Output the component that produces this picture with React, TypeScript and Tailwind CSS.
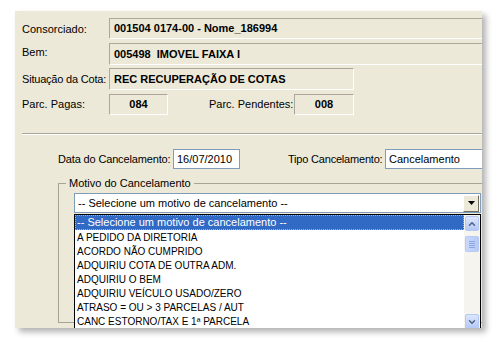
import { ChevronDown, ChevronUp } from 'lucide-react';

const motivos = [
  '-- Selecione um motivo de cancelamento --',
  'A PEDIDO DA DIRETORIA',
  'ACORDO NÃO CUMPRIDO',
  'ADQUIRIU COTA DE OUTRA ADM.',
  'ADQUIRIU O BEM',
  'ADQUIRIU VEÍCULO USADO/ZERO',
  'ATRASO = OU > 3 PARCELAS / AUT',
  'CANC ESTORNO/TAX E 1ª PARCELA',
];

const sunken = 'border-t border-l border-t-[#ACA899] border-l-[#ACA899] border-b border-r border-b-white border-r-white';

function Field({ width, children, center }: { width: string; children: React.ReactNode; center?: boolean }) {
  return (
    <div className={`${width} shrink-0 h-full ${sunken} flex items-center font-bold text-[11px] whitespace-pre ${center ? 'justify-center' : 'pl-[4px]'}`}>
      {children}
    </div>
  );
}

export default function App() {
  return (
    <div className="w-[497px] h-[348px] bg-white pl-[15px] pt-[11px] font-['Liberation_Sans',Arial,sans-serif] text-[11px] text-black">
      <div className="w-[467px] h-[317px] bg-[#ECE9D8] overflow-hidden shadow-[4px_4px_6px_rgba(0,0,0,0.3)]">
        <div className="pl-[7px] pt-[7px] whitespace-nowrap">
          <div className="flex h-[21px]">
            <div className="w-[87px] shrink-0 pt-[3px]">Consorciado:</div>
            <Field width="w-[400px]">001504 0174-00 - Nome_186994</Field>
          </div>
          <div className="flex h-[22px] mt-[4px]">
            <div className="w-[87px] shrink-0 pt-[1px]">Bem:</div>
            <Field width="w-[400px]">005498  IMOVEL FAIXA I</Field>
          </div>
          <div className="flex h-[22px] mt-[3px] items-center">
            <div className="w-[87px] shrink-0 tracking-[-0.2px]">Situação da Cota:</div>
            <Field width="w-[245px]">REC RECUPERAÇÃO DE COTAS</Field>
          </div>
          <div className="flex h-[21px] mt-[4px] items-center">
            <div className="w-[87px] shrink-0">Parc. Pagas:</div>
            <Field width="w-[59px]" center>084</Field>
            <div className="ml-[41px] w-[85px] shrink-0">Parc. Pendentes:</div>
            <Field width="w-[60px]" center>008</Field>
          </div>

          <div className="mt-[18px] h-[2px] w-[470px] border-t border-t-[#ACA899] border-b border-b-white" />

          <div className="flex items-center h-[20px] mt-[14px] pl-[36px]">
            <div className="w-[115px] shrink-0 tracking-[-0.15px]">Data do Cancelamento:</div>
            <div className="w-[67px] shrink-0 h-full bg-white border border-[#7F9DB9] flex items-center pl-[3px]">16/07/2010</div>
            <div className="ml-[48px] w-[97px] shrink-0 tracking-[-0.2px]">Tipo Cancelamento:</div>
            <div className="w-[130px] shrink-0 h-full bg-white border border-[#7F9DB9] flex items-center pl-[3px]">Cancelamento</div>
          </div>

          <fieldset className="ml-[36px] mt-[8px] w-[440px] h-[146px] border border-[#A6A595]">
            <legend className="ml-[7px] px-[3px] leading-[13px]">Motivo do Cancelamento</legend>
            <div className="relative ml-[15px] mt-[3px] w-[407px] h-[20px] bg-white border border-[#7F9DB9] flex items-center pl-[3px]">
              <span className="flex-1">-- Selecione um motivo de cancelamento --</span>
              <div className="w-[16px] h-[17px] mr-[1px] bg-[#ECE9D8] border-t border-l border-t-white border-l-white border-b border-r border-b-[#716F64] border-r-[#716F64] flex items-center justify-center">
                <svg width="7" height="4" viewBox="0 0 7 4"><path d="M0 0h7L3.5 4z" fill="#000" /></svg>
              </div>
              <div className="absolute left-[-1px] top-[20px] w-[407px] h-[122px] bg-white border border-black flex">
                <div className="flex-1 flex flex-col">
                  {motivos.map((m, i) => (
                    <div
                      key={m}
                      className={`shrink-0 flex items-center ${
                        i === 0
                          ? 'h-[15px] bg-[#316AC5] text-white border border-dotted border-[#9DB4DE] pl-[1px]'
                          : 'h-[14px] pl-[2px] text-[10px]'
                      }`}
                    >
                      {m}
                    </div>
                  ))}
                </div>
                <div className="w-[16px] bg-[#F5F4EE] flex flex-col pt-[1px] px-[1px]">
                  <div className="h-[15px] rounded-[2px] bg-gradient-to-b from-[#DCE6FD] to-[#B5C8F5] border border-[#B6C9F5] flex items-center justify-center">
                    <ChevronUp size={10} strokeWidth={3.5} color="#4D6185" />
                  </div>
                  <div className="mt-[5px] h-[16px] rounded-[2px] bg-gradient-to-r from-[#C9D8FC] to-[#B7CAF5] border border-[#B6C9F5] flex flex-col items-center justify-center gap-[1px]">
                    <div className="w-[6px] h-[1px] bg-[#8DA6E0]" />
                    <div className="w-[6px] h-[1px] bg-[#8DA6E0]" />
                    <div className="w-[6px] h-[1px] bg-[#8DA6E0]" />
                    <div className="w-[6px] h-[1px] bg-[#8DA6E0]" />
                  </div>
                  <div className="flex-1" />
                  <div className="h-[15px] mb-[6px] rounded-[2px] bg-gradient-to-b from-[#DCE6FD] to-[#B5C8F5] border border-[#B6C9F5] flex items-center justify-center">
                    <ChevronDown size={10} strokeWidth={3.5} color="#4D6185" />
                  </div>
                </div>
              </div>
            </div>
          </fieldset>
        </div>
      </div>
    </div>
  );
}
